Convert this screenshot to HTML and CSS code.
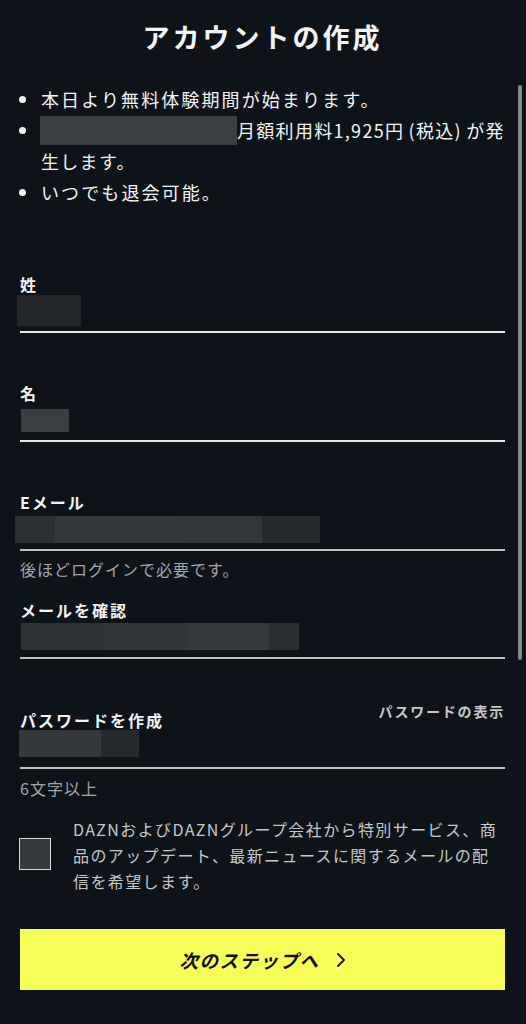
FILE: index.html
```html
<!DOCTYPE html>
<html lang="ja">
<head>
  <meta charset="UTF-8" />
  <meta name="viewport" content="width=device-width, initial-scale=1.0"/>
  <title>アカウントの作成</title>
  <link rel="stylesheet" href="styles.css">
</head>
<body>
  <div class="page">
    <h1>アカウントの作成</h1>
    <ul class="perks">
      <li><span>本日より無料体験期間が始まります。</span></li>
      <li class="fee"><span><span class="redact redact-plan"></span>月額利用料1,925円 (税込) が発生します。</span></li>
      <li><span>いつでも退会可能。</span></li>
    </ul>

    <form class="signup">
      <div class="field field-first">
        <label class="field-label">姓</label>
        <div class="field-input bright">
          <span class="redact redact-last"></span>
        </div>
      </div>

      <div class="field">
        <label class="field-label">名</label>
        <div class="field-input bright">
          <span class="redact redact-first"></span>
        </div>
      </div>

      <div class="field">
        <label class="field-label">Eメール</label>
        <div class="field-input">
          <span class="redact redact-email"></span>
        </div>
        <div class="field-hint">後ほどログインで必要です。</div>
      </div>

      <div class="field field-close">
        <label class="field-label">メールを確認</label>
        <div class="field-input">
          <span class="redact redact-confirm"></span>
        </div>
      </div>

      <div class="field field-password">
        <div class="label-row">
          <label class="field-label">パスワードを作成</label>
          <button type="button" class="show-pass">パスワードの表示</button>
        </div>
        <div class="field-input">
          <span class="redact redact-pass"></span>
        </div>
        <div class="field-hint">6文字以上</div>
      </div>

      <label class="optin">
        <span class="optin-box"></span>
        <span class="optin-text">DAZNおよびDAZNグループ会社から特別サービス、商品のアップデート、最新ニュースに関するメールの配信を希望します。</span>
      </label>

      <button type="button" class="next-btn">
        <span>次のステップへ</span>
        <svg class="chev" width="10" height="16" viewBox="0 0 10 16" aria-hidden="true">
          <path d="M2 2 L8 8 L2 14" fill="none" stroke="#111" stroke-width="1.8" stroke-linecap="round" stroke-linejoin="round"/>
        </svg>
      </button>
    </form>
  </div>
  <div class="scrollbar"></div>
</body>
</html>
```

FILE: styles.css
```css
:root {
  --bg: #0e131a;
  --text: #f2f3f4;
  --text-soft: #c5c7ca;
  --text-dim: #a3a6aa;
  --line: #bfc0c2;
  --line-bright: #e8e9ea;
  --redact: #35383d;
  --yellow: #f6fd58;
}
html, body {
  margin: 0;
  padding: 0;
  background: var(--bg);
  color: var(--text);
  font-family: "Noto Sans CJK JP", "Noto Sans", sans-serif;
  min-height: 100vh;
}
.page {
  padding: 17px 21px 40px 20px;
}
h1 {
  margin: 0;
  text-align: center;
  font-size: 27px;
  line-height: 40px;
  font-weight: 700;
  letter-spacing: 3px;
}
.perks {
  list-style: none;
  margin: 27px 0 0 0;
  padding: 0;
}
.perks li {
  display: grid;
  grid-template-columns: 21px 1fr;
  font-size: 18px;
  line-height: 31px;
  letter-spacing: 2.1px;
}
.perks li.fee {
  letter-spacing: 1.3px;
  word-spacing: -1px;
}
.perks li::before {
  content: "";
  width: 7px;
  height: 7px;
  border-radius: 50%;
  background: var(--text);
  margin: 12px 0 0 -1px;
}
.redact {
  display: inline-block;
  background: var(--redact);
  vertical-align: top;
}
.redact-plan {
  width: 197px;
  height: 29px;
  margin: 1px 0 0 -1px;
  background: #3a3d42;
}
.redact-last {
  width: 64px;
  height: 31px;
  margin-left: -3px;
  margin-bottom: 5px;
  background: #22252a;
}
.redact-first {
  width: 48px;
  height: 23px;
  margin-left: 1px;
  margin-bottom: 8px;
  background: #3a3d42;
}
.redact-email {
  width: 305px;
  height: 27px;
  margin-left: -5px;
  margin-bottom: 6px;
  background: linear-gradient(90deg, #2c2f34 0 40px, #34373c 40px 165px, #33363b 165px 247px, #25282d 247px);
}
.redact-confirm {
  width: 278px;
  height: 27px;
  margin-left: 1px;
  margin-bottom: 7px;
  background: linear-gradient(90deg, #2e3136 0 82px, #32353a 82px 165px, #35383d 165px 248px, #2a2d32 248px);
}
.redact-pass {
  width: 120px;
  height: 27px;
  margin-left: -1px;
  margin-bottom: 10px;
  background: linear-gradient(90deg, #34373c 0 82px, #25282d 82px);
}
.signup {
  margin: 0;
}
.field {
  margin-top: 48px;
}
.field-first {
  margin-top: 64px;
}
.field-close {
  margin-top: 18px;
}
.field-password {
  margin-top: 42px;
}
.field-label {
  display: block;
  font-size: 16px;
  line-height: 24px;
  font-weight: 700;
  letter-spacing: 2px;
}
.field-input {
  display: flex;
  align-items: flex-end;
  height: 35px;
  border-bottom: 2px solid var(--line);
}
.field-input.bright {
  border-bottom-color: var(--line-bright);
}
.field-hint {
  margin-top: 7px;
  font-size: 16px;
  line-height: 22px;
  color: var(--text-dim);
  letter-spacing: 1px;
}
.field-password .field-hint {
  margin-top: 8px;
}
.label-row {
  display: flex;
  justify-content: space-between;
  align-items: flex-start;
}
.label-row .field-label {
  padding-top: 7px;
}
.show-pass {
  background: none;
  border: none;
  padding: 0;
  font-family: inherit;
  font-size: 14px;
  line-height: 20px;
  font-weight: 700;
  letter-spacing: 1.8px;
  color: var(--text-soft);
  cursor: pointer;
}
.optin {
  display: flex;
  align-items: center;
  gap: 22px;
  margin-top: 17px;
}
.optin-box {
  flex: 0 0 auto;
  width: 30px;
  height: 30px;
  margin: 0 0 3px -1px;
  background: #36393e;
  border: 1.5px solid #d8d9da;
}
.optin-text {
  font-size: 16px;
  line-height: 26px;
  letter-spacing: 1.4px;
  color: var(--text-soft);
}
.next-btn {
  display: flex;
  align-items: center;
  justify-content: center;
  gap: 16px;
  width: 100%;
  height: 61px;
  margin-top: 35px;
  background: var(--yellow);
  border: none;
  border-radius: 0;
  font-family: inherit;
  font-size: 18.5px;
  font-weight: 700;
  font-style: italic;
  letter-spacing: 1.5px;
  color: #111;
  cursor: pointer;
}
.chev {
  display: block;
}
.scrollbar {
  position: absolute;
  top: 85px;
  left: 518px;
  width: 4px;
  height: 575px;
  border-radius: 2px;
  background: #85878a;
}
```
